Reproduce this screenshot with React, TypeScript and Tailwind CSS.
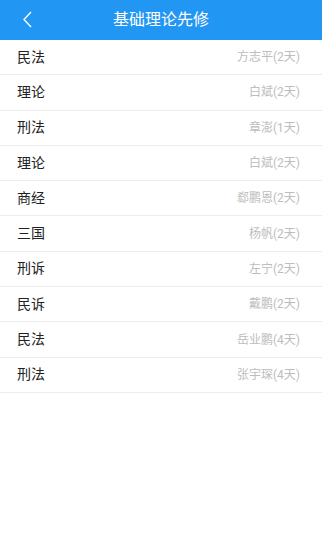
const rows: [string, string][] = [
  ["民法", "方志平(2天)"],
  ["理论", "白斌(2天)"],
  ["刑法", "章澎(1天)"],
  ["理论", "白斌(2天)"],
  ["商经", "郄鹏恩(2天)"],
  ["三国", "杨帆(2天)"],
  ["刑诉", "左宁(2天)"],
  ["民诉", "戴鹏(2天)"],
  ["民法", "岳业鹏(4天)"],
  ["刑法", "张宇琛(4天)"],
];

export default function App() {
  return (
    <div className="min-h-[550px] w-[322px] bg-white font-['Roboto','Noto_Sans_CJK_SC',sans-serif]">
      <header className="relative flex h-[40px] items-center justify-center bg-[#2196f3]">
        <svg
          className="absolute left-[21px] top-[11px]"
          width="13"
          height="17"
          viewBox="0 0 13 17"
          fill="none"
          stroke="white"
          strokeWidth="1.4"
        >
          <path d="M10 1 L3 8.5 L10 16" />
        </svg>
        <h1 className="text-[16px] text-white">基础理论先修</h1>
      </header>
      <ul>
        {rows.map(([subject, teacher], i) => (
          <li
            key={i}
            className="flex h-[35.3px] items-center justify-between border-b border-[#ececec] pl-[17px] pr-[22px]"
          >
            <span className="text-[14px] text-[#222]">{subject}</span>
            <span className="text-[12px] text-[#bdbdbd]">{teacher}</span>
          </li>
        ))}
      </ul>
    </div>
  );
}
